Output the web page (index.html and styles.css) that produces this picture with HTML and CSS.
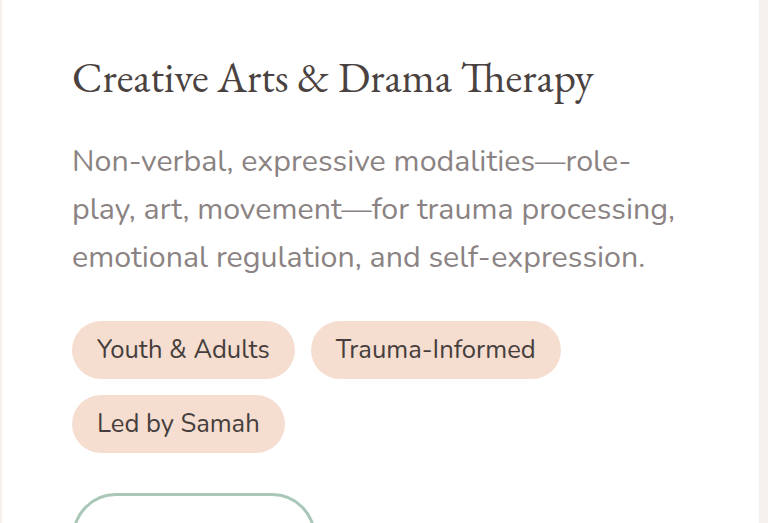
FILE: index.html
```html
<!DOCTYPE html>
<html lang="en">
<head>
<meta charset="UTF-8">
<meta name="viewport" content="width=device-width, initial-scale=1.0">
<title>Creative Arts &amp; Drama Therapy</title>
<link rel="stylesheet" href="styles.css">
</head>
<body>
  <div class="service-card">
    <h3 class="service-title">Creative Arts &amp; Drama Therapy</h3>
    <p class="service-desc">Non-verbal, expressive modalities—role-play, art, movement—for trauma processing, emotional regulation, and self-expression.</p>
    <div class="tags">
      <span class="tag">Youth &amp; Adults</span>
      <span class="tag">Trauma-Informed</span>
      <span class="tag">Led by Samah</span>
    </div>
    <a href="#" class="btn-outline">Learn More</a>
  </div>
</body>
</html>
```
FILE: styles.css
```css
body {
  margin: 0;
  padding: 0 9px 0 2px;
  background: #f6f1ed;
  font-family: "Nunito", "Lato", sans-serif;
  overflow: hidden;
}
.service-card {
  background: #ffffff;
  padding: 52px 70px 60px 70px;
  min-height: 600px;
}
.service-title {
  font-family: "EB Garamond", "Liberation Serif", serif;
  font-weight: 400;
  font-size: 42.8px;
  line-height: 1.2;
  color: #4a4240;
  margin: 0 0 34px 0;
  /* joined "Th" in Therapy */
  font-variant-ligatures: common-ligatures discretionary-ligatures;
}
.service-desc {
  font-size: 30.4px;
  line-height: 48px;
  color: #8b8383;
  margin: 0 0 40px 0;
}
.tags {
  display: flex;
  flex-wrap: wrap;
  gap: 16px;
  margin-bottom: 40px;
}
.tag {
  background: #f5ddd0;
  color: #463e3c;
  font-size: 25.6px;
  line-height: 58px;
  padding: 0 25px;
  border-radius: 30px;
}
.btn-outline {
  display: inline-block;
  box-sizing: border-box;
  width: 244px;
  line-height: 86px;
  text-align: center;
  font-size: 25.6px;
  border: 3px solid #a9c7b6;
  border-radius: 44px;
  color: #6f9a84;
  text-decoration: none;
}
```
